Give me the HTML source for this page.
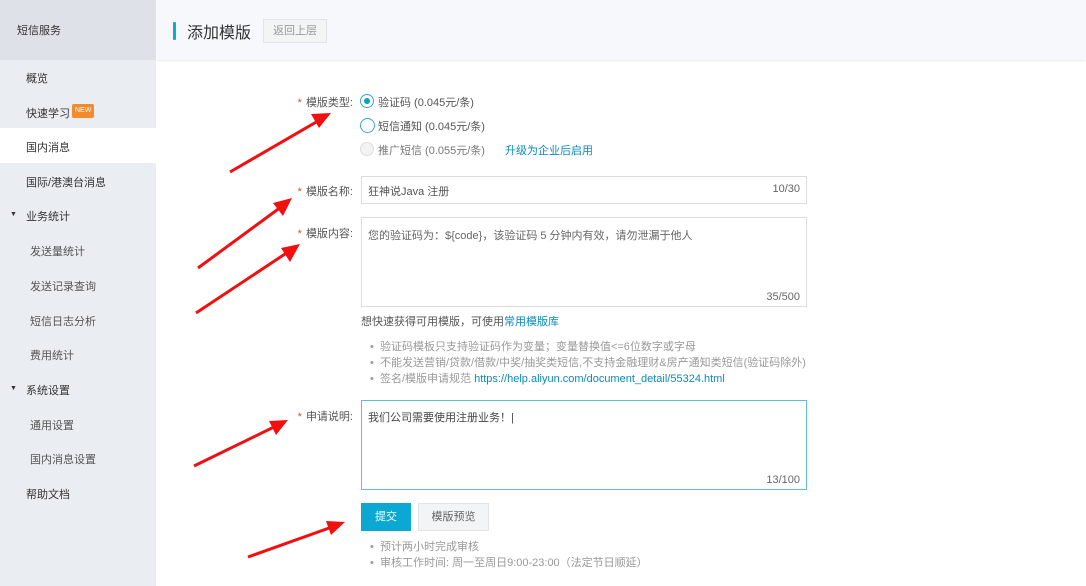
<!DOCTYPE html>
<html><head><meta charset="utf-8"><style>
*{margin:0;padding:0;box-sizing:border-box}
body{width:1086px;height:586px;overflow:hidden;background:#fff;font-family:"Liberation Sans","Noto Sans CJK SC",sans-serif;font-size:11px;color:#333;position:relative}
.a{position:absolute;white-space:nowrap}
.side{position:absolute;left:0;top:0;width:156px;height:586px;background:#eaedf1}
.sh{position:absolute;left:0;top:0;width:156px;height:60px;background:#dee2e8}
.top{position:absolute;left:156px;top:0;right:0;height:60px;background:#f7f8fb;box-shadow:0 1px 2px #e6e8ec}
.lbl{position:absolute;width:120px;text-align:right;left:233px;color:#555}
.lbl b{color:#c0583a;font-weight:normal;margin-right:4px}
.box{position:absolute;border:1px solid #dcdcdc;background:#fff}
.gray{color:#999}
.blue{color:#0a8bb8}
.radio{position:absolute;width:14px;height:14px;border-radius:50%;border:1px solid #38a9c9;background:#fff}
.cnt{position:absolute;left:361px;width:439px;text-align:right;color:#666}
</style></head><body>
<div class="side"></div><div class="sh"></div>
<div class="a" style="left:17px;top:22px">短信服务</div>
<div class="a" style="left:26px;top:70px">概览</div>
<div class="a" style="left:26px;top:105px">快速学习</div>
<div class="a" style="left:72px;top:104px;background:#f28b2b;color:#fff;font-size:7px;padding:2px 3px;border-radius:2px;line-height:10px">NEW</div>
<div class="a" style="left:0;top:128px;width:156px;height:35px;background:#fff"></div>
<div class="a" style="left:26px;top:139px">国内消息</div>
<div class="a" style="left:26px;top:174px">国际/港澳台消息</div>
<div class="a" style="left:10px;top:211px;font-size:7px">▼</div><div class="a" style="left:26px;top:208px">业务统计</div>
<div class="a" style="left:30px;top:243px;color:#555">发送量统计</div>
<div class="a" style="left:30px;top:278px;color:#555">发送记录查询</div>
<div class="a" style="left:30px;top:313px;color:#555">短信日志分析</div>
<div class="a" style="left:30px;top:347px;color:#555">费用统计</div>
<div class="a" style="left:10px;top:385px;font-size:7px">▼</div><div class="a" style="left:26px;top:382px">系统设置</div>
<div class="a" style="left:30px;top:417px;color:#555">通用设置</div>
<div class="a" style="left:30px;top:451px;color:#555">国内消息设置</div>
<div class="a" style="left:26px;top:486px">帮助文档</div>

<div class="top"></div>
<div class="a" style="left:173px;top:22px;width:3px;height:18px;background:#16a7cf;border-radius:1px"></div>
<div class="a" style="left:187px;top:19px;font-size:16px;color:#333">添加模版</div>
<div class="a" style="left:263px;top:19px;width:64px;height:24px;border:1px solid #e3e3e3;background:#f3f4f6;color:#999;text-align:center;line-height:22px">返回上层</div>

<div class="lbl" style="top:94px"><b>*</b>模版类型:</div>
<div class="radio" style="left:360px;top:94px"><div style="position:absolute;left:3px;top:3px;width:6px;height:6px;border-radius:50%;background:#0a9fc9"></div></div>
<div class="a" style="left:378px;top:94px;color:#555">验证码 (0.045元/条)</div>
<div class="radio" style="left:360px;top:118px;width:15px;height:15px"></div>
<div class="a" style="left:378px;top:118px;color:#555">短信通知 (0.045元/条)</div>
<div class="radio" style="left:360px;top:142px;border-color:#ddd;background:#f3f3f3"></div>
<div class="a" style="left:378px;top:142px;color:#777">推广短信 (0.055元/条)</div>
<div class="a blue" style="left:505px;top:142px">升级为企业后启用</div>

<div class="lbl" style="top:183px"><b>*</b>模版名称:</div>
<div class="box" style="left:361px;top:176px;width:446px;height:28px"></div>
<div class="a" style="left:368px;top:183px;color:#555">狂神说Java 注册</div>
<div class="cnt" style="top:183px">10/30</div>

<div class="lbl" style="top:225px"><b>*</b>模版内容:</div>
<div class="box" style="left:361px;top:217px;width:446px;height:90px"></div>
<div class="a" style="left:368px;top:227px;color:#666">您的验证码为：${code}，该验证码 5 分钟内有效，请勿泄漏于他人</div>
<div class="cnt" style="top:291px">35/500</div>
<div class="a" style="left:361px;top:313px;color:#555">想快速获得可用模版，可使用<span class="blue">常用模版库</span></div>

<div class="a gray" style="left:370px;top:339px;line-height:16px;font-size:11px">• &nbsp;验证码模板只支持验证码作为变量；变量替换值&lt;=6位数字或字母<br>• &nbsp;不能发送营销/贷款/借款/中奖/抽奖类短信,不支持金融理财&amp;房产通知类短信(验证码除外)<br>• &nbsp;签名/模版申请规范 <span class="blue">https://help.aliyun.com/document_detail/55324.html</span></div>

<div class="lbl" style="top:408px"><b>*</b>申请说明:</div>
<div class="box" style="left:361px;top:400px;width:446px;height:90px;border-color:#5cc0cf"></div>
<div class="a" style="left:368px;top:409px;color:#444">我们公司需要使用注册业务！|</div>
<div class="cnt" style="top:474px">13/100</div>

<div class="a" style="left:361px;top:503px;width:50px;height:28px;background:#0aa8d2;color:#fff;text-align:center;line-height:28px">提交</div>
<div class="a" style="left:418px;top:503px;width:71px;height:28px;background:#f3f4f6;border:1px solid #e3e3e3;color:#666;text-align:center;line-height:26px">模版预览</div>
<div class="a gray" style="left:370px;top:539px;line-height:16px;font-size:11px">• &nbsp;预计两小时完成审核<br>• &nbsp;审核工作时间: 周一至周日9:00-23:00（法定节日顺延）</div>

<svg class="a" style="left:0;top:0" width="1086" height="586">
<g stroke="#f01010" stroke-width="3" fill="none">
<line x1="230" y1="172" x2="318" y2="121"/>
<line x1="198" y1="268" x2="281" y2="207"/>
<line x1="196" y1="313" x2="288" y2="252"/>
<line x1="194" y1="466" x2="276" y2="426"/>
<line x1="248" y1="557" x2="332" y2="527"/>
</g>
<g fill="#f01010">
<polygon points="331,113 311,114 319,128"/>
<polygon points="292,198 273,203 283,216"/>
<polygon points="300,244 281,248 290,262"/>
<polygon points="288,420 269,421 276,435"/>
<polygon points="345,522 326,521 331,535"/>
</g></svg>
</body></html>
